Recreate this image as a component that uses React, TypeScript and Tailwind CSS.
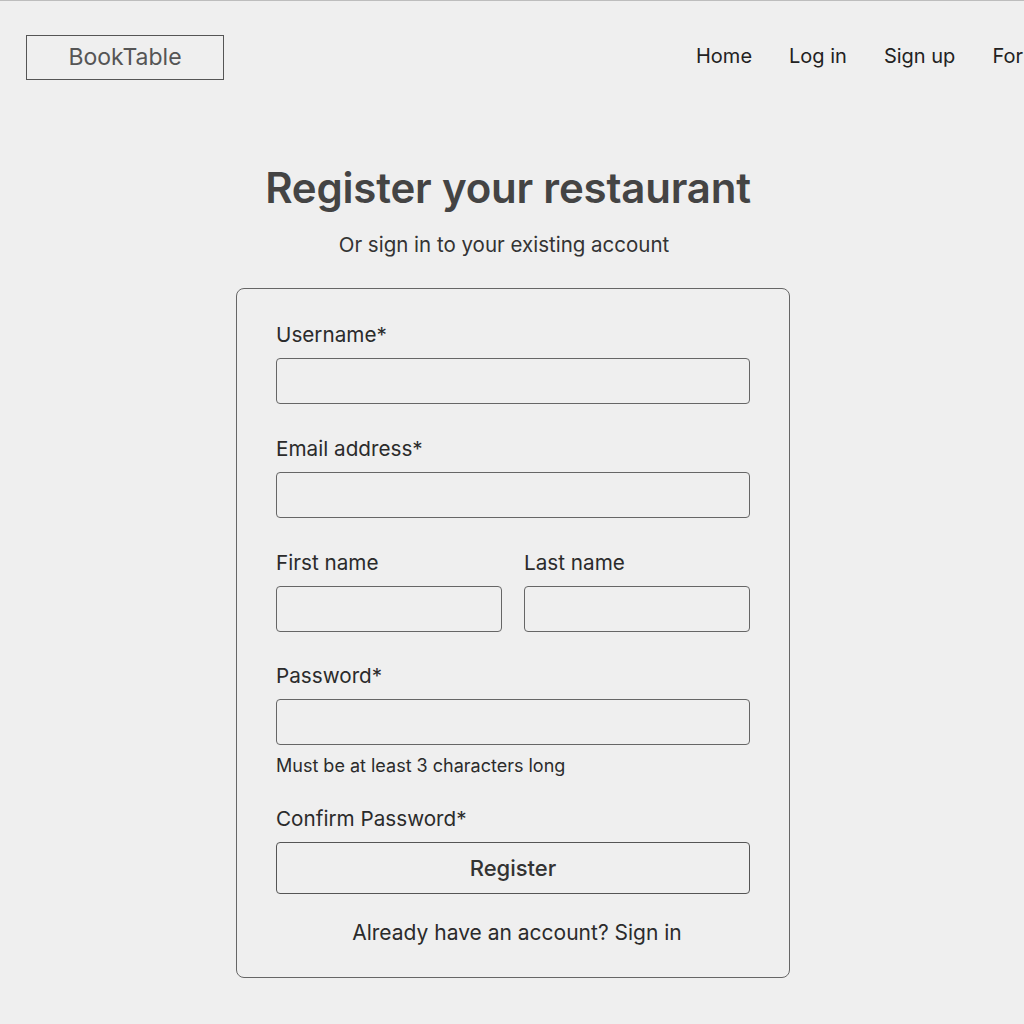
export default function App() {
  const label = 'block text-[20.7px] leading-[28px] text-[#2b2b2b]';
  const input = 'block w-full h-[46px] rounded-[4px] border border-[#666] bg-transparent';
  return (
    <div
      className="min-h-[1024px] w-[1024px] overflow-hidden bg-[#efefef] border-t border-[#bdbdbd] text-[#2b2b2b]"
      style={{ fontFamily: 'Inter, "Noto Sans", sans-serif' }}
    >
      <header className="flex items-center pl-[26px] pt-[34px] whitespace-nowrap">
        <div className="w-[198px] h-[45px] shrink-0 border-[1.5px] border-[#555] flex items-center justify-center text-[23px] text-[#555]">
          BookTable
        </div>
        <nav className="ml-[472px] flex gap-[37px] text-[20px] text-[#222] -mt-[3px]">
          <span>Home</span>
          <span>Log in</span>
          <span>Sign up</span>
          <span>For</span>
        </nav>
      </header>

      <main className="flex flex-col items-center">
        <h1 className="mt-[83px] -ml-[8px] text-[42px] leading-[50px] font-semibold text-[#444] tracking-[-0.2px]">
          Register your restaurant
        </h1>
        <p className="mt-[18px] -ml-[16px] text-[20.5px] leading-[28px] text-[#333]">Or sign in to your existing account</p>

        <form className="mt-[29px] ml-[2px] w-[554px] rounded-[8px] border border-[#666] px-[39px] pt-[32px] pb-[30px]">
          <label className={label}>Username*</label>
          <div className={`${input} mt-[9px]`} />

          <label className={`${label} mt-[31px]`}>Email address*</label>
          <div className={`${input} mt-[9px]`} />

          <div className="mt-[31px] grid grid-cols-2 gap-[22px]">
            <div>
              <label className={label}>First name</label>
              <div className={`${input} mt-[9px]`} />
            </div>
            <div>
              <label className={label}>Last name</label>
              <div className={`${input} mt-[9px]`} />
            </div>
          </div>

          <label className={`${label} mt-[30px]`}>Password*</label>
          <div className={`${input} mt-[9px]`} />
          <p className="mt-[9px] text-[18px] leading-[24px] text-[#2b2b2b]">Must be at least 3 characters long</p>

          <label className={`${label} mt-[27px]`}>Confirm Password*</label>
          <button
            type="button"
            className="mt-[9px] w-full h-[52px] rounded-[4px] border border-[#555] text-[22px] font-medium text-[#333]"
          >
            Register
          </button>

          <p className="mt-[25px] pl-[8px] text-center text-[21px] leading-[28px] text-[#2b2b2b]">
            Already have an account? Sign in
          </p>
        </form>
      </main>
    </div>
  );
}
